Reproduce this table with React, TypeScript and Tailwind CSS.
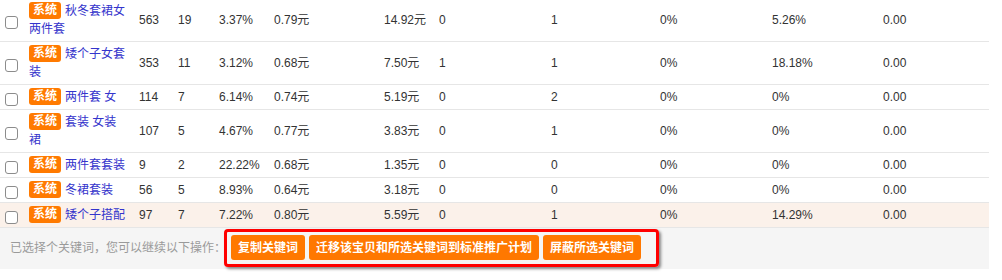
import React from "react";

type Row = {
  kw: string[];
  c: string[];
  hl?: boolean;
};

const rows: Row[] = [
  { kw: ["秋冬套裙女", "两件套"], c: ["563", "19", "3.37%", "0.79元", "14.92元", "0", "1", "0%", "5.26%", "0.00"] },
  { kw: ["矮个子女套", "装"], c: ["353", "11", "3.12%", "0.68元", "7.50元", "1", "1", "0%", "18.18%", "0.00"] },
  { kw: ["两件套 女"], c: ["114", "7", "6.14%", "0.74元", "5.19元", "0", "2", "0%", "0%", "0.00"] },
  { kw: ["套装 女装", "裙"], c: ["107", "5", "4.67%", "0.77元", "3.83元", "0", "1", "0%", "0%", "0.00"] },
  { kw: ["两件套套装"], c: ["9", "2", "22.22%", "0.68元", "1.35元", "0", "0", "0%", "0%", "0.00"] },
  { kw: ["冬裙套装"], c: ["56", "5", "8.93%", "0.64元", "3.18元", "0", "0", "0%", "0%", "0.00"] },
  { kw: ["矮个子搭配"], c: ["97", "7", "7.22%", "0.80元", "5.59元", "0", "1", "0%", "14.29%", "0.00"], hl: true },
];

const widths = [
  "w-[39px]",
  "w-[41px]",
  "w-[55px]",
  "w-[110px]",
  "w-[55px]",
  "w-[112px]",
  "w-[109px]",
  "w-[112px]",
  "w-[111px]",
  "w-[110px]",
];

export default function App() {
  return (
    <div
      className="w-[1002px] h-[280px] bg-white overflow-hidden text-[12px] text-[#333]"
      style={{ fontFamily: '"Liberation Sans", "Noto Sans CJK SC", sans-serif' }}
    >
      <div className="w-[989px] -mt-px">
        {rows.map((r, i) => (
          <div
            key={i}
            className={`flex items-center border-b border-[#e6e6e6] ${r.hl ? "bg-[#fbf1ea]" : "bg-white"}`}
          >
            <div className="w-[25px] shrink-0 pl-[5px] flex items-center">
              <span className="mt-[4px] block w-[13px] h-[13px] rounded-[3px] border border-[#8c8c8c] bg-white" />
            </div>
            <div className="w-[110px] shrink-0 pl-[4px] pr-[8px] py-[3px] leading-[18px] text-[#3434cc]">
              <div className="flex items-start h-[18px]">
                <span className="shrink-0 h-[17px] leading-[17px] px-[4px] mr-[4px] rounded-[3px] bg-[#ff7a00] text-white font-bold">
                  系统
                </span>
                <span className="whitespace-nowrap pt-[1px] leading-[17px]">{r.kw[0]}</span>
              </div>
              {r.kw[1] && <div className="h-[18px] whitespace-nowrap">{r.kw[1]}</div>}
            </div>
            {r.c.map((v, j) => (
              <div key={j} className={`${widths[j]} shrink-0 pl-[4px] leading-[18px] whitespace-nowrap`}>
                {v}
              </div>
            ))}
          </div>
        ))}
        <div className="flex items-center h-[41px] bg-[#f5f5f5] pt-[1px] pb-[2px]">
          <span className="w-[224px] shrink-0 pl-[10px] text-[#9a9a9a] whitespace-nowrap">
            已选择个关键词，您可以继续以下操作：
          </span>
          <div className="flex gap-[4px] border-[3px] border-[#ff0000] rounded-[4px] pl-[4px] pr-[15px] pt-[3px] pb-[4px] shadow-[2px_2px_3px_rgba(0,0,0,0.45)]">
            <button className="h-[25px] px-[7px] rounded-[3px] bg-[#ff7800] text-white font-bold text-[12px]">
              复制关键词
            </button>
            <button className="h-[25px] px-[7px] rounded-[3px] bg-[#ff7800] text-white font-bold text-[12px]">
              迁移该宝贝和所选关键词到标准推广计划
            </button>
            <button className="h-[25px] px-[7px] rounded-[3px] bg-[#ff7800] text-white font-bold text-[12px]">
              屏蔽所选关键词
            </button>
          </div>
        </div>
      </div>
    </div>
  );
}
